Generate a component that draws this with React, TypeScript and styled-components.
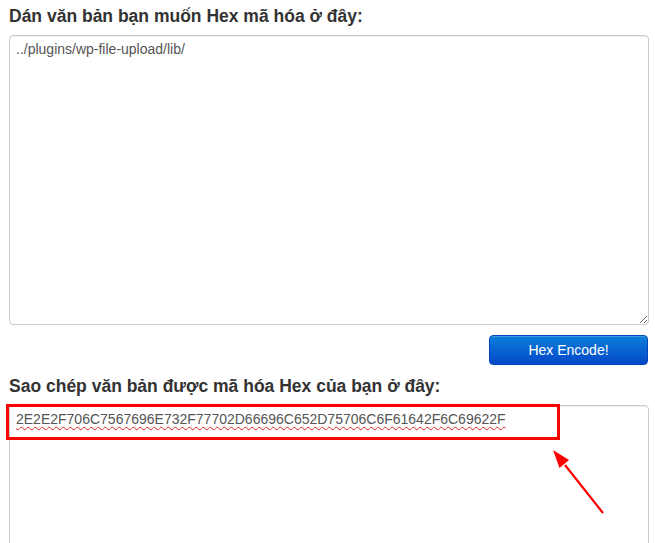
import React from "react";
import styled, { createGlobalStyle } from "styled-components";

const Global = createGlobalStyle`
  html, body { margin: 0; padding: 0; background: #fff; }
  body { font-family: "Liberation Sans", Arial, sans-serif; color: #333; }
  * { box-sizing: border-box; }
`;

const Page = styled.div`
  padding: 4px 6px 0 9px;
  display: flex;
  flex-direction: column;
`;

const Heading = styled.h3`
  margin: 0;
  font-size: 17.5px;
  line-height: 24px;
  font-weight: bold;
  color: #333;
`;

const Area = styled.textarea<{ $h: number; $mark?: boolean }>`
  display: block;
  width: 100%;
  height: ${(p) => p.$h}px;
  margin-top: 7px;
  padding: 3px 6px;
  border: 1px solid #ccc;
  border-radius: 4px;
  box-shadow: inset 0 1px 1px rgba(0, 0, 0, 0.075);
  font-family: "Liberation Sans", Arial, sans-serif;
  font-size: 14px;
  line-height: 20px;
  color: #555;
  background: #fff;
  resize: ${(p) => (p.$mark ? "none" : "both")};
  outline: none;
  text-decoration: ${(p) => (p.$mark ? "underline wavy #e02020" : "none")};
  text-decoration-thickness: 1px;
  text-underline-offset: 2px;
`;

const ButtonRow = styled.div`
  display: flex;
  justify-content: flex-end;
  margin-top: 10px;
  padding-right: 1px;
`;

const Button = styled.button`
  width: 159px;
  height: 30px;
  border: 1px solid #0447b8;
  border-radius: 4px;
  background-image: linear-gradient(to bottom, #0a7fd9, #0448c9);
  color: #fff;
  font-family: "Liberation Sans", Arial, sans-serif;
  font-size: 14px;
  line-height: 20px;
  cursor: pointer;
  box-shadow: inset 0 1px 0 rgba(255, 255, 255, 0.2);
`;

const Heading2 = styled(Heading)`
  margin-top: 9px;
`;

const OutputWrap = styled.div`
  position: relative;
`;

const Highlight = styled.div`
  position: absolute;
  left: -3px;
  top: 6px;
  width: 554px;
  height: 36px;
  border: 3px solid #ff0000;
  pointer-events: none;
`;

const Arrow = styled.svg`
  position: absolute;
  left: 530px;
  top: 30px;
  pointer-events: none;
`;

export default function App() {
  return (
    <>
      <Global />
      <Page>
        <Heading>Dán văn bản bạn muốn Hex mã hóa ở đây:</Heading>
        <Area $h={290} defaultValue="../plugins/wp-file-upload/lib/" spellCheck={false} />
        <ButtonRow>
          <Button>Hex Encode!</Button>
        </ButtonRow>
        <Heading2>Sao chép văn bản được mã hóa Hex của bạn ở đây:</Heading2>
        <OutputWrap>
          <Area
            $h={200}
            $mark
            defaultValue="2E2E2F706C7567696E732F77702D66696C652D75706C6F61642F6C69622F"
            spellCheck={false}
          />
          <Highlight />
          <Arrow width="90" height="100" viewBox="0 0 90 100">
            <line x1="64" y1="85" x2="26" y2="37" stroke="#ff0000" strokeWidth="2.2" />
            <polygon points="14,22 30,32 20.5,40" fill="#ff0000" />
          </Arrow>
        </OutputWrap>
      </Page>
    </>
  );
}
